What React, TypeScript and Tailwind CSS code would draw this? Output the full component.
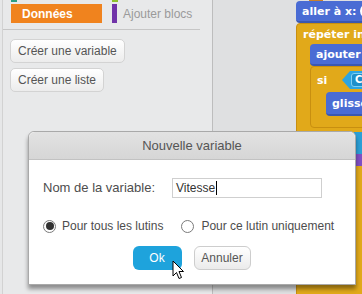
import React from 'react';

const ui = { fontFamily: '"Liberation Sans", Arial, sans-serif' };
const blockFont = { fontFamily: '"DejaVu Sans", Verdana, sans-serif' };

function Cursor() {
  return (
    <svg className="absolute left-[172px] top-[260px]" width="13" height="20" viewBox="0 0 13 20">
      <path
        d="M1 1 L1 16 L4.5 12.5 L7 18.5 L9.5 17.5 L7 11.5 L11.5 11.5 Z"
        fill="#fff"
        stroke="#000"
        strokeWidth="1"
        strokeLinejoin="round"
      />
    </svg>
  );
}

function Scripts() {
  return (
    <div className="relative flex-1 h-full border-l border-[#bdbdbd] bg-[#dfe0e1] overflow-hidden" style={blockFont}>
      {/* notch of the block above */}
      <div className="absolute left-[96px] top-0 w-[14px] h-[2px] bg-[#c9802a]" />
      {/* aller à x: */}
      <div className="absolute left-[83px] top-[1px] w-[200px] h-[22px] rounded-[4px] bg-[#4a6cd4] border-b-2 border-[#3b58b0] flex items-center pl-[6px]">
        <span className="text-white text-[11px] font-bold leading-none whitespace-nowrap">aller à x:</span>
        <span className="ml-[4px] w-[12px] h-[14px] rounded-l-full bg-white shrink-0" />
      </div>
      {/* répéter */}
      <div className="absolute left-[83px] top-[23px] w-[200px] h-[300px] rounded-[4px] bg-[#e1a91a] border border-[#c88f10]">
        <div className="h-[21px] flex items-center pl-[6px]">
          <span className="text-white text-[11px] font-bold leading-none whitespace-nowrap">répéter indéfiniment</span>
        </div>
      </div>
      {/* ajouter */}
      <div className="absolute left-[97px] top-[44px] w-[200px] h-[22px] rounded-[4px] bg-[#4a6cd4] border-b-2 border-[#3b58b0] flex items-center pl-[6px]">
        <span className="text-white text-[11px] font-bold leading-none whitespace-nowrap">ajouter</span>
      </div>
      {/* si */}
      <div className="absolute left-[97px] top-[66px] w-[200px] h-[62px] rounded-[4px] bg-[#e1a91a] border border-[#c88f10]">
        <div className="h-[26px] flex items-center pl-[6px]">
          <span className="text-white text-[11px] font-bold leading-none">si</span>
        </div>
      </div>
      {/* capteur */}
      <div className="absolute left-[129px] top-[71px] w-[60px] h-[18px] bg-[#2ca5e2] [clip-path:polygon(8px_0,100%_0,100%_100%,8px_100%,0_50%)]" />
      <div className="absolute left-[138px] top-[73px] w-[40px] h-[14px] rounded-[3px] bg-[#1f8fc9] border border-[#7fd0f5] flex items-center pl-[3px]">
        <span className="text-white text-[10px] font-bold leading-none">C</span>
      </div>
      {/* glisser */}
      <div className="absolute left-[113px] top-[92px] w-[200px] h-[24px] rounded-[4px] bg-[#4a6cd4] border-b-2 border-[#3b58b0] flex items-center pl-[6px]">
        <span className="text-white text-[11px] font-bold leading-none whitespace-nowrap">glisser</span>
      </div>
      {/* right edge, below the dialog */}
      <div className="absolute left-[141px] top-[132px] w-[20px] h-[22px] bg-[#2b9fd6]" />
      <div className="absolute left-[141px] top-[154px] w-[20px] h-[12px] bg-[#7f4fc4]" />
    </div>
  );
}

function Radio({ checked }: { checked?: boolean }) {
  return (
    <span className="w-[13px] h-[13px] rounded-full border border-[#7a7a7a] bg-white flex items-center justify-center shrink-0">
      {checked && <span className="w-[8px] h-[8px] rounded-full bg-[#333]" />}
    </span>
  );
}

function Dialog() {
  return (
    <div
      className="absolute left-[28px] top-[131px] w-[328px] h-[154px] rounded-t-[6px] border border-[#a9a9a9] bg-white shadow-[0_4px_4px_rgba(0,0,0,0.4)] flex flex-col"
      style={ui}
    >
      <div className="h-[28px] rounded-t-[6px] bg-gradient-to-b from-[#e2e2e2] to-[#d6d6d6] border-b border-[#c2c2c2] flex items-center justify-center">
        <span className="text-[13px] text-[#555]">Nouvelle variable</span>
      </div>
      <div className="flex flex-col pl-[14px] pt-[18px]">
        <div className="flex items-center">
          <span className="text-[13px] text-[#4d4d4d] w-[129px]">Nom de la variable:</span>
          <div className="w-[150px] h-[20px] border border-[#cfcfcf] flex items-center pl-[3px]">
            <span className="text-[12px] text-[#333]">Vitesse</span>
            <span className="w-px h-[14px] bg-black ml-px" />
          </div>
        </div>
        <div className="flex items-center mt-[21px] h-[14px]">
          <Radio checked />
          <span className="ml-[6px] text-[12px] text-[#4d4d4d]">Pour tous les lutins</span>
          <span className="ml-[18px]" />
          <Radio />
          <span className="ml-[7px] text-[12px] text-[#4d4d4d]">Pour ce lutin uniquement</span>
        </div>
      </div>
      <div className="flex justify-center gap-[12px] mt-[13px] pr-[1px]">
        <div className="w-[49px] h-[24px] rounded-[6px] bg-[#1ea3dc] flex items-center justify-center">
          <span className="text-[12px] text-white">Ok</span>
        </div>
        <div className="w-[57px] h-[24px] rounded-[6px] border border-[#cdcdcd] bg-gradient-to-b from-white to-[#ebebeb] flex items-center justify-center">
          <span className="text-[12px] text-[#555]">Annuler</span>
        </div>
      </div>
    </div>
  );
}

export default function App() {
  return (
    <div className="relative w-[362px] h-[294px] overflow-hidden flex bg-[#e6e7e8]">
      <div className="w-[210px] h-full ml-[2px] border-l border-[#d2d2d2] bg-[#e8e9ea] flex flex-col" style={ui}>
        <div className="flex h-[2px] pl-[8px]">
          <span className="w-[6px] h-[2px] bg-[#2a9e82]" />
          <span className="w-[6px] h-[2px] bg-[#8fc02c] ml-[95px]" />
        </div>
        <div className="flex items-center mt-[2px] pl-[8px] h-[19px]">
          <div className="w-[91px] h-[19px] bg-[#f0831e] flex items-center pl-[11px]">
            <span className="text-white text-[12px] font-bold">Données</span>
          </div>
          <span className="w-[5px] h-[19px] bg-[#7033a8] ml-[10px]" />
          <span className="ml-[6px] text-[12px] text-[#9a9a9a] whitespace-nowrap">Ajouter blocs</span>
        </div>
        <div className="mt-[6px] mr-[12px] h-px bg-[#c6c6c6]" />
        <div className="flex flex-col items-start gap-[5px] pl-[7px] mt-[9px]">
          <div className="h-[24px] px-[7px] rounded-[5px] border border-[#d3d3d3] bg-gradient-to-b from-white to-[#ececec] flex items-center">
            <span className="text-[12px] text-[#555]">Créer une variable</span>
          </div>
          <div className="h-[24px] px-[7px] rounded-[5px] border border-[#d3d3d3] bg-gradient-to-b from-white to-[#ececec] flex items-center">
            <span className="text-[12px] text-[#555]">Créer une liste</span>
          </div>
        </div>
      </div>
      <Scripts />
      <Dialog />
      <Cursor />
    </div>
  );
}
